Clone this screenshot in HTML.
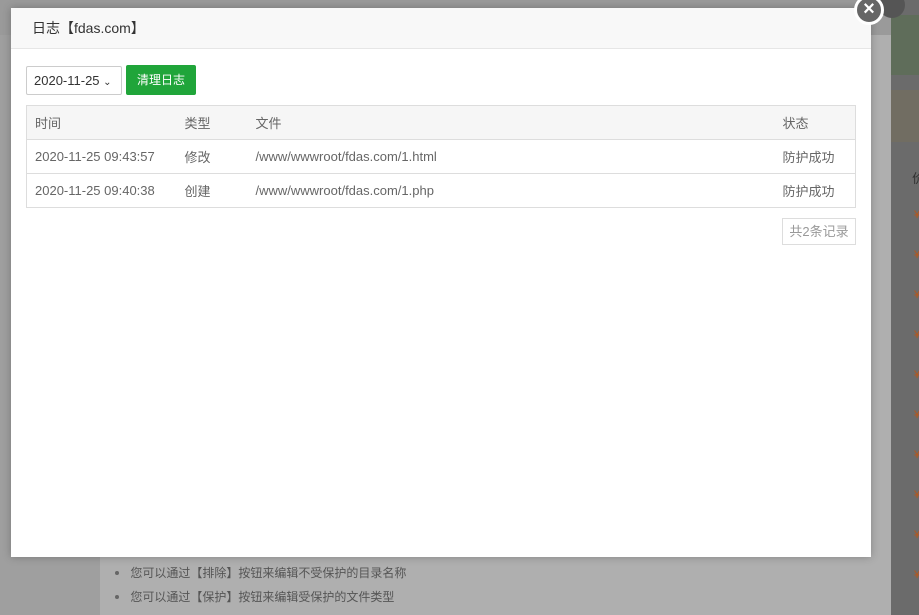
<!DOCTYPE html>
<html><head><meta charset="utf-8"><style>
*{box-sizing:border-box;margin:0;padding:0}
body{width:919px;height:615px;overflow:hidden;position:relative;background:#9f9f9f;font-family:"Liberation Sans","Noto Sans CJK SC",sans-serif;font-size:13px;color:#555}
.abs{position:absolute}
.modal{left:11px;top:8px;width:860px;height:549px;background:#fff;box-shadow:0 0 8px rgba(0,0,0,.25)}
.hd{height:41px;background:#f8f8f8;border-bottom:1px solid #e6e6e6;padding-left:21px;line-height:41px;font-size:14px;color:#333}
table{border-collapse:collapse;position:absolute;left:15px;top:97px;width:830px;border:1px solid #ddd}
td,th{height:34px;border-top:1px solid #ddd;text-align:left;font-weight:normal;padding-left:8px;color:#666;font-size:13px}
th{background:#f6f6f6;color:#666}
li{list-style:none;position:absolute;left:117px;font-size:12px;color:#555}
li:before{content:"";position:absolute;left:-2px;top:7px;width:4px;height:4px;border-radius:50%;background:#666}
</style></head><body>
<div class="abs" style="left:0;top:0;width:919px;height:35px;background:#9a9a9a"></div>
<div class="abs" style="left:100px;top:35px;width:791px;height:580px;background:#afafaf"></div>
<div class="abs" style="left:891px;top:0;width:28px;height:615px;background:#6b6b6b"></div>
<div class="abs" style="left:891px;top:15px;width:28px;height:60px;background:#5f6d5a"></div>
<div class="abs" style="left:891px;top:90px;width:28px;height:52px;background:#716d62"></div>
<div class="abs" style="left:879px;top:-8px;width:26px;height:26px;border-radius:50%;background:#555"></div>
<div class="abs" style="left:912px;top:168px;color:#333">价</div>
<div class="abs" style="left:914px;top:195px;color:#b8561a;font-size:11px;line-height:40px">¥<br>¥<br>¥<br>¥<br>¥<br>¥<br>¥<br>¥<br>¥<br>¥</div>
<li style="top:564px;">&nbsp;&nbsp;&nbsp;&nbsp;您可以通过【排除】按钮来编辑不受保护的目录名称</li>
<li style="top:588px;">&nbsp;&nbsp;&nbsp;&nbsp;您可以通过【保护】按钮来编辑受保护的文件类型</li>
<div class="abs modal">
 <div class="hd">日志【fdas.com】</div>
 <div class="abs" style="left:15px;top:58px;width:96px;height:29px;border:1px solid #ccc;border-radius:2px;line-height:27px;padding-left:7px;color:#333;font-size:13px">2020-11-25 <span style="font-size:10px">⌄</span></div>
 <div class="abs" style="left:115px;top:57px;width:70px;height:30px;background:#20a53a;border-radius:2px;color:#fff;line-height:30px;text-align:center;font-size:12px">清理日志</div>
 <table>
  <tr><th style="width:150px;border-top:0">时间</th><th style="width:71px;border-top:0">类型</th><th style="border-top:0">文件</th><th style="width:81px;border-top:0">状态</th></tr>
  <tr><td>2020-11-25 09:43:57</td><td>修改</td><td>/www/wwwroot/fdas.com/1.html</td><td>防护成功</td></tr>
  <tr><td>2020-11-25 09:40:38</td><td>创建</td><td>/www/wwwroot/fdas.com/1.php</td><td>防护成功</td></tr>
 </table>
 <div class="abs" style="left:771px;top:210px;width:74px;height:27px;border:1px solid #ddd;line-height:25px;text-align:center;color:#999">共2条记录</div>
</div>
<div class="abs" style="left:854px;top:-5px;width:30px;height:30px;border-radius:50%;background:#666;border:3px solid #fff;color:#fff;text-align:center;line-height:23px;font-size:20px;font-weight:bold">×</div>
</body></html>
